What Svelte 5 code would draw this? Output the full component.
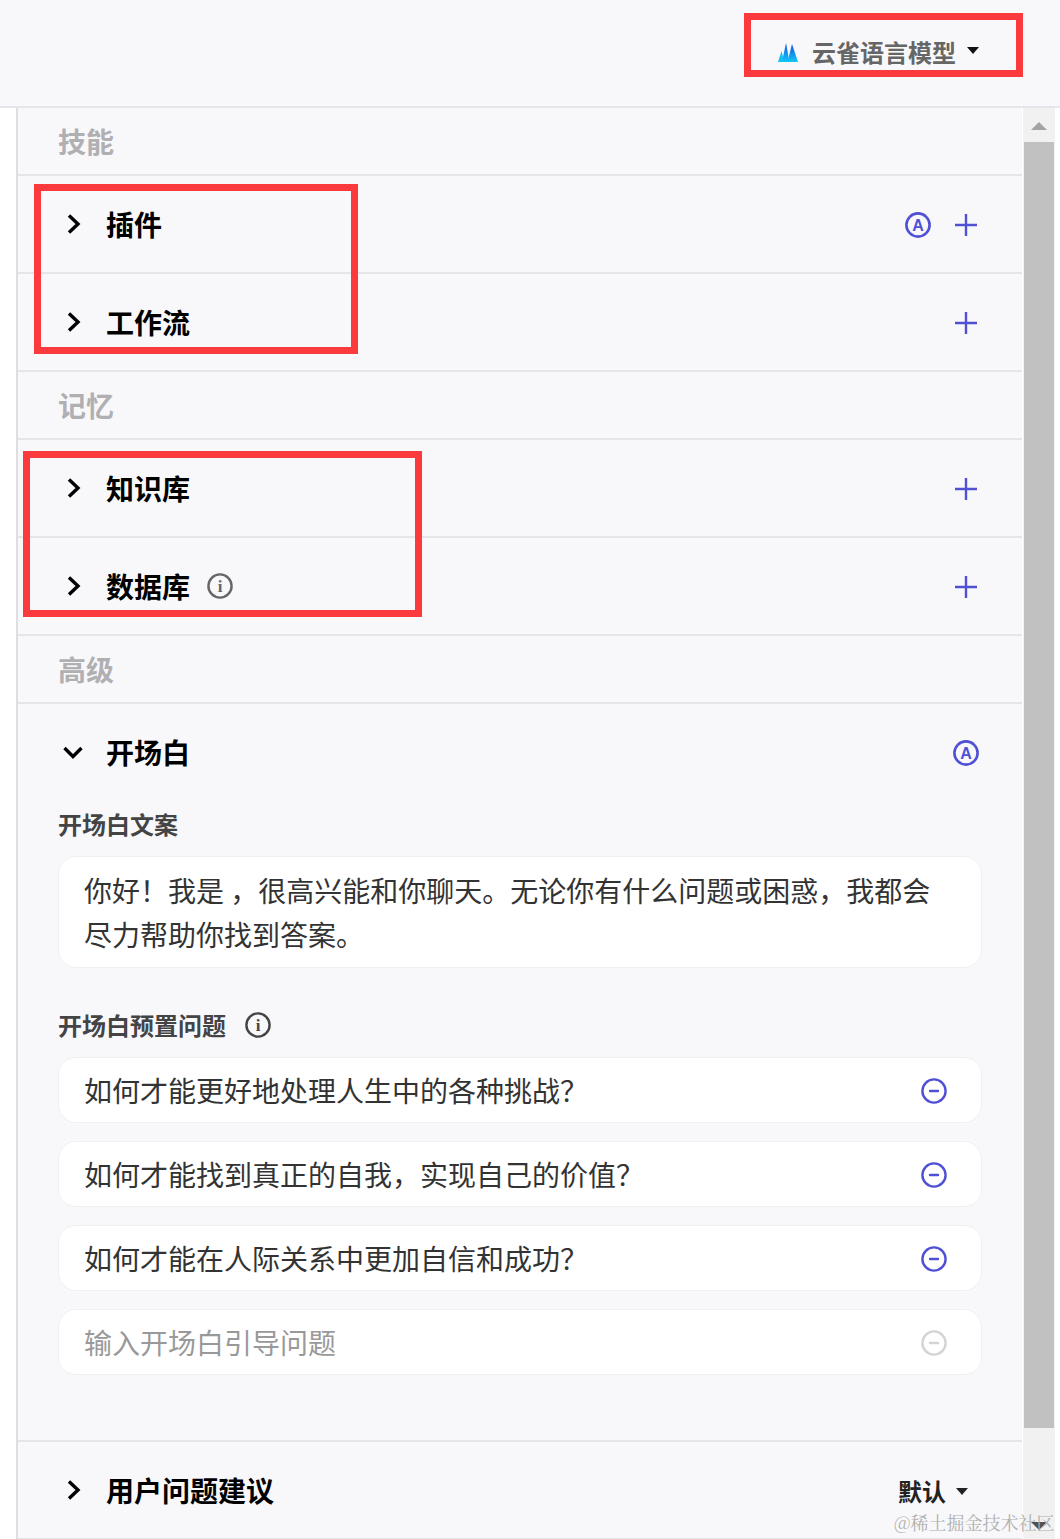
<script>
  const questions = [
    '如何才能更好地处理人生中的各种挑战\uFF1F',
    '如何才能找到真正的自我\uFF0C实现自己的价值\uFF1F',
    '如何才能在人际关系中更加自信和成功\uFF1F'
  ];
  const greeting = '你好\uFF01我是 \uFF0C很高兴能和你聊天。无论你有什么问题或困惑\uFF0C我都会尽力帮助你找到答案。';
</script>

{#snippet chevron(open = false)}
  <svg class="chev" viewBox="0 0 24 24" aria-hidden="true">
    {#if open}
      <path d="M3.5 8 L12 16.5 L20.5 8" />
    {:else}
      <path d="M8 3.5 L17 12 L8 20.5" />
    {/if}
  </svg>
{/snippet}

{#snippet plus()}
  <svg class="ico" viewBox="0 0 24 24" aria-hidden="true"><path d="M12 1V23M1 12H23" class="pl" /></svg>
{/snippet}

{#snippet auto()}
  <svg class="ico auto" viewBox="0 0 26 26" aria-hidden="true">
    <circle cx="13" cy="13" r="11.6" class="ring" />
    <text x="13" y="18.8" text-anchor="middle" class="a">A</text>
  </svg>
{/snippet}

{#snippet info()}
  <svg class="info" viewBox="0 0 26 26" aria-hidden="true">
    <circle cx="13" cy="13" r="11.6" />
    <text x="13" y="19" text-anchor="middle">i</text>
  </svg>
{/snippet}

{#snippet minus(muted = false)}
  <svg class="minus" class:muted viewBox="0 0 26 26" aria-hidden="true">
    <circle cx="13" cy="13" r="11.6" />
    <path d="M9 13H17" />
  </svg>
{/snippet}

<div class="page">
  <header class="top">
    <div class="model">
      <svg class="logo" viewBox="0 0 20 20" aria-hidden="true">
        <defs>
          <linearGradient id="lg" x1="0" y1="0" x2="0" y2="1">
            <stop offset="0" stop-color="#1450e0" />
            <stop offset="1" stop-color="#10c8f8" />
          </linearGradient>
        </defs>
        <path d="M0 20 L3.5 9 L6.5 20 Z" fill="#12c2f6" />
        <path d="M4 20 L8 1 L11.5 20 Z" fill="url(#lg)" />
        <path d="M9.5 20 L14 2 L20 20 Z" fill="url(#lg)" />
      </svg>
      <span class="model-name">云雀语言模型</span>
      <span class="caret"></span>
    </div>
  </header>

  <div class="body">
    <main class="panel">
      <div class="section">技能</div>
      <div class="row">
        {@render chevron()}<span class="name">插件</span>
        <span class="actions">{@render auto()}{@render plus()}</span>
      </div>
      <div class="row">
        {@render chevron()}<span class="name">工作流</span>
        <span class="actions">{@render plus()}</span>
      </div>

      <div class="section">记忆</div>
      <div class="row">
        {@render chevron()}<span class="name">知识库</span>
        <span class="actions">{@render plus()}</span>
      </div>
      <div class="row">
        {@render chevron()}<span class="name">数据库</span>{@render info()}
        <span class="actions">{@render plus()}</span>
      </div>

      <div class="section">高级</div>
      <div class="opening">
        <div class="row plain">
          {@render chevron(true)}<span class="name">开场白</span>
          <span class="actions">{@render auto()}</span>
        </div>
        <div class="label first">开场白文案</div>
        <div class="box">{greeting}</div>
        <div class="label second">开场白预置问题 {@render info()}</div>
        <div class="questions">
          {#each questions as q}
            <div class="q"><span>{q}</span>{@render minus()}</div>
          {/each}
          <div class="q placeholder"><span>输入开场白引导问题</span>{@render minus(true)}</div>
        </div>
      </div>
      <div class="row">
        {@render chevron()}<span class="name">用户问题建议</span>
        <span class="actions dflt">默认<span class="caret small"></span></span>
      </div>
    </main>
    <div class="scrollbar">
      <span class="arrow up"></span>
      <span class="thumb"></span>
      <span class="arrow down"></span>
    </div>
  </div>

  <div class="frame f1"></div>
  <div class="frame f2"></div>
  <div class="frame f3"></div>
  <div class="watermark">@稀土掘金技术社区</div>
</div>

<style>
  :global(body) { margin: 0; background: #fff; }
  .page {
    position: relative;
    width: 1060px;
    height: 1539px;
    overflow: hidden;
    font-family: "Noto Sans CJK SC", "Liberation Sans", sans-serif;
    color: #000;
  }
  .top {
    height: 106px;
    background: #f8f8fb;
    border-bottom: 2px solid #e6e6ea;
    display: flex;
    align-items: center;
    justify-content: flex-end;
    padding-right: 81px;
    box-sizing: content-box;
  }
  .model { display: flex; align-items: center; margin-top: -2px; }
  .logo { width: 20px; height: 20px; margin-right: 14px; }
  .model-name { font-size: 24px; font-weight: 700; color: #666; line-height: 34px; }
  .caret {
    width: 0; height: 0; margin-left: 11px; margin-top: -3px;
    border-left: 6px solid transparent;
    border-right: 6px solid transparent;
    border-top: 7px solid #111;
  }
  .caret.small { margin-left: 10px; margin-top: 2px; border-top-color: #222; }
  .body { display: flex; height: 1431px; }
  .panel {
    margin-left: 16px;
    width: 1006px;
    flex: none;
    box-sizing: border-box;
    border-left: 2px solid #dfdfe3;
    background: #f8f8fb;
    height: 1431px;
    overflow: hidden;
  }
  .section {
    height: 66px;
    padding-left: 40px;
    font-size: 28px;
    font-weight: 700;
    color: #b0b0b2;
    line-height: 66px;
    border-bottom: 2px solid #e6e6ea;
  }
  .row {
    height: 96px;
    border-bottom: 2px solid #e6e6ea;
    display: flex;
    align-items: center;
    padding: 0 44px 0 43px;
  }
  .row.plain { border-bottom: 0; margin-bottom: 2px; }
  .name { font-size: 28px; font-weight: 700; margin-left: 21px; line-height: 40px; }
  .actions { margin-left: auto; margin-top: 2px; display: flex; align-items: center; gap: 24px; }
  .chev { width: 24px; height: 24px; flex: none; }
  .chev path { fill: none; stroke: #000; stroke-width: 3.4; }
  .ico { width: 24px; height: 24px; display: block; }
  .ico.auto { width: 26px; height: 26px; margin-right: -1px; }
  .pl { fill: none; stroke: #4f50d4; stroke-width: 2.4; }
  .ring { fill: none; stroke: #4f50d4; stroke-width: 2.6; }
  .a { font-size: 16px; font-weight: 700; fill: #4f50d4; font-family: "Liberation Sans", sans-serif; }
  .info { width: 26px; height: 26px; margin-left: 17px; flex: none; }
  .info circle { fill: none; stroke: #666; stroke-width: 2.4; }
  .info text { font-size: 17px; font-weight: 700; fill: #666; font-family: "Liberation Serif", serif; }
  .label { padding-left: 40px; font-size: 24px; font-weight: 700; color: #444; line-height: 34px; display: flex; align-items: center; }
  .label.first { margin-top: 7px; }
  .label.second { margin-top: 40px; }
  .label .info { margin-left: 19px; }
  .label .info circle { stroke: #444; }
  .label .info text { fill: #444; }
  .opening { height: 738px; box-sizing: border-box; border-bottom: 2px solid #e6e6ea; }
  .box {
    margin: 15px 40px 0;
    padding: 11px 25px;
    background: #fff;
    border: 1px solid #f0f0f3;
    border-radius: 18px;
    font-size: 28px;
    line-height: 44px;
    color: #333;
  }
  .questions { margin: 15px 40px 0; display: flex; flex-direction: column; gap: 18px; }
  .q {
    height: 66px;
    box-sizing: border-box;
    padding: 0 34px 0 25px;
    background: #fff;
    border: 1px solid #f0f0f3;
    border-radius: 18px;
    display: flex;
    align-items: center;
    justify-content: space-between;
    font-size: 28px;
    color: #333;
  }
  .placeholder { color: #999; }
  .minus { width: 26px; height: 26px; flex: none; margin-top: 2px; }
  .minus circle { fill: none; stroke: #4f50d4; stroke-width: 2.4; }
  .minus path { fill: none; stroke: #4f50d4; stroke-width: 2.4; stroke-linecap: round; }
  .minus.muted circle, .minus.muted path { stroke: #d4d4d6; }
  .dflt { gap: 0; margin-top: 0; font-size: 24px; font-weight: 700; color: #222; padding-right: 10px; }
  .scrollbar {
    margin-left: 1px;
    width: 32px;
    height: 1431px;
    background: #f1f1f1;
    position: relative;
    display: flex;
    flex-direction: column;
    align-items: center;
  }
  .thumb { width: 30px; height: 1286px; background: #c1c1c1; }
  .arrow { width: 0; height: 0; border-left: 8px solid transparent; border-right: 8px solid transparent; }
  .arrow.up { border-bottom: 8px solid #a3a3a3; margin: 14px 0 12px; }
  .arrow.down { border-top: 8px solid #505050; margin-top: 94px; }
  .frame { position: absolute; box-sizing: border-box; border: 7px solid #fb3a3d; pointer-events: none; }
  .f1 { left: 744px; top: 13px; width: 279px; height: 64px; }
  .f2 { left: 34px; top: 184px; width: 324px; height: 170px; }
  .f3 { left: 23px; top: 451px; width: 399px; height: 166px; }
  .watermark {
    position: absolute;
    left: 894px;
    top: 1508px;
    font-size: 18px;
    line-height: 28px;
    color: #b0b0b0;
    font-family: "Noto Serif CJK SC", "Liberation Serif", "Noto Sans CJK SC", serif;
    white-space: nowrap;
  }
</style>
